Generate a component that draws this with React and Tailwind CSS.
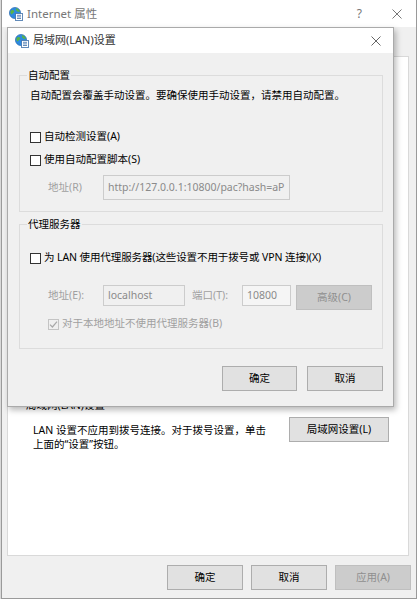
import React from 'react';

function NetIcon() {
  return (
    <svg width="14" height="14" viewBox="0 0 14 14" className="shrink-0">
      <circle cx="6" cy="6" r="5.6" fill="#2d8ae0" />
      <circle cx="6" cy="6" r="5.6" fill="none" stroke="#1c5fa8" strokeWidth="0.6" />
      <path d="M1.6 4 C2.8 2.6 4.6 2.8 5.4 4.2 C5 5.8 3.6 6.4 2.4 7.4 C1.4 6.4 1.2 5 1.6 4Z" fill="#58b348" />
      <path d="M6.8 1.2 C8.6 1.5 10.2 2.6 11 4.4 C9.6 5 8 4.6 7.2 3.4Z" fill="#58b348" />
      <rect x="6.6" y="6.4" width="6.8" height="7.2" fill="#ffffff" stroke="#3d6fa8" strokeWidth="0.8" />
      <path d="M8 8.3h4M8 9.9h4M8 11.5h4" stroke="#3d6fa8" strokeWidth="0.8" />
    </svg>
  );
}

function CloseGlyph({ color }) {
  return (
    <svg width="10" height="10" viewBox="0 0 10 10">
      <path d="M0.5 0.5 L9.5 9.5 M9.5 0.5 L0.5 9.5" stroke={color} strokeWidth="1" />
    </svg>
  );
}

function Check({ checked, disabled }) {
  return (
    <span
      className={`w-[11px] h-[11px] border flex items-center justify-center shrink-0 ${
        disabled ? 'border-[#c4c4c4] bg-[#f0f0f0]' : 'border-[#333333] bg-white'
      }`}
    >
      {checked && (
        <svg width="9" height="9" viewBox="0 0 9 9">
          <path d="M1 4.6 L3.4 7 L8 1.6" fill="none" stroke={disabled ? '#a8a8a8' : '#000'} strokeWidth="1.2" />
        </svg>
      )}
    </span>
  );
}

function Group({ title, className, children }) {
  return (
    <div className={`relative border border-[#dcdcdc] ${className}`}>
      <span className="absolute left-[7px] -top-[8px] bg-[#f0f0f0] px-[1px] leading-[14px]">{title}</span>
      {children}
    </div>
  );
}

function Button({ children, disabled, className = '' }) {
  return (
    <button
      type="button"
      className={`h-[25px] border flex items-center justify-center leading-none ${
        disabled ? 'bg-[#cccccc] border-[#bfbfbf] text-[#8f8f8f]' : 'bg-[#e1e1e1] border-[#adadad] text-black'
      } ${className}`}
    >
      {children}
    </button>
  );
}

function LanDialog() {
  return (
    <div className="absolute left-[7px] top-[27px] w-[387px] h-[380px] border border-[#aaaaaa] bg-[#f0f0f0] flex flex-col shadow-[2px_3px_6px_rgba(0,0,0,0.28)]">
      <div className="h-[25px] bg-white flex items-center pl-[7px] pr-[8px]">
        <NetIcon />
        <span className="ml-[4px] text-[#333333] text-[11px]">局域网(LAN)设置</span>
        <span className="ml-auto mr-[4px] flex">
          <CloseGlyph color="#666666" />
        </span>
      </div>

      <div className="flex flex-col pl-[11px] pt-[22px]">
        <Group title="自动配置" className="w-[364px] pt-[12px] pb-[11px]">
          <div className="pl-[10px] leading-[14px] h-[14px] whitespace-nowrap">
            自动配置会覆盖手动设置。要确保使用手动设置，请禁用自动配置。
          </div>
          <div className="mt-[27px] h-[16px] pl-[10px] flex items-center gap-[3px]">
            <Check />
            <span>自动检测设置(A)</span>
          </div>
          <div className="mt-[7px] h-[16px] pl-[10px] flex items-center gap-[3px]">
            <Check />
            <span>使用自动配置脚本(S)</span>
          </div>
          <div className="mt-[7px] h-[25px] pl-[28px] flex items-center">
            <span className="w-[55px] text-[#a0a0a0]">地址(R)</span>
            <div className="w-[187px] h-[25px] border border-[#cccccc] bg-[#f0f0f0] flex items-center pl-[4px] overflow-hidden whitespace-nowrap text-[#8a8a8a]">
              http://127.0.0.1:10800/pac?hash=aP
            </div>
          </div>
        </Group>

        <Group title="代理服务器" className="w-[364px] mt-[12px] pt-[25px] pb-[16px]">
          <div className="h-[16px] pl-[10px] flex items-center gap-[3px] whitespace-nowrap">
            <Check />
            <span className="tracking-[-0.1px]">为 LAN 使用代理服务器(这些设置不用于拨号或 VPN 连接)(X)</span>
          </div>
          <div className="mt-[19px] h-[24px] pl-[28px] flex items-start">
            <span className="w-[55px] h-[21px] flex items-center text-[#a0a0a0]">地址(E):</span>
            <div className="w-[82px] h-[21px] border border-[#cccccc] bg-[#f0f0f0] flex items-center pl-[4px] text-[#8a8a8a]">
              localhost
            </div>
            <span className="ml-[7px] w-[50px] h-[21px] flex items-center text-[#a0a0a0]">端口(T):</span>
            <div className="w-[49px] h-[21px] border border-[#cccccc] bg-[#f5f5f5] flex items-center pl-[4px] text-[#8a8a8a]">
              10800
            </div>
            <Button disabled className="ml-[5px] w-[76px] h-[24px]">
              高级(C)
            </Button>
          </div>
          <div className="mt-[7px] h-[16px] pl-[28px] flex items-center gap-[3px] text-[#a0a0a0]">
            <Check checked disabled />
            <span>对于本地地址不使用代理服务器(B)</span>
          </div>
        </Group>

        <div className="w-[364px] mt-[17px] flex justify-end gap-[10px]">
          <Button className="w-[75px]">确定</Button>
          <Button className="w-[76px]">取消</Button>
        </div>
      </div>
    </div>
  );
}

export default function App() {
  return (
    <div className="relative w-[417px] h-[599px] overflow-hidden bg-[#d9d9d9] pl-[1px] text-[10.5px] text-black font-['Noto_Sans','Noto_Sans_CJK_SC',sans-serif]">
      <div className="w-[416px] h-[599px] flex flex-col bg-[#f0f0f0] border-x border-b border-[#9a9a9a]">
        <div className="h-[27px] bg-white flex items-center pl-[7px] pr-[14px] shrink-0">
          <NetIcon />
          <span className="ml-[4px] text-[#777777] text-[11.5px]">Internet 属性</span>
          <span className="ml-auto text-[#777777] text-[12px]">?</span>
          <span className="ml-[30px] flex">
            <CloseGlyph color="#777777" />
          </span>
        </div>

        <div className="mt-[29px] ml-[5px] w-[402px] h-[500px] bg-white border border-[#d9d9d9] pt-[341px] pl-[18px] shrink-0">
          <div className="h-[14px] leading-[14px]">局域网(LAN)设置</div>
          <div className="mt-[5px] flex">
            <div className="mt-[6px] ml-[7px] leading-[14px] whitespace-nowrap">
              LAN 设置不应用到拨号连接。对于拨号设置，单击
              <br />
              上面的“设置”按钮。
            </div>
            <Button className="ml-auto mr-[19px] w-[100px] h-[25px]">局域网设置(L)</Button>
          </div>
        </div>

        <div className="mt-[9px] pr-[5px] flex justify-end gap-[8px] shrink-0">
          <Button className="w-[76px]">确定</Button>
          <Button className="w-[76px]">取消</Button>
          <Button disabled className="w-[76px]">应用(A)</Button>
        </div>
      </div>

      <LanDialog />
    </div>
  );
}
